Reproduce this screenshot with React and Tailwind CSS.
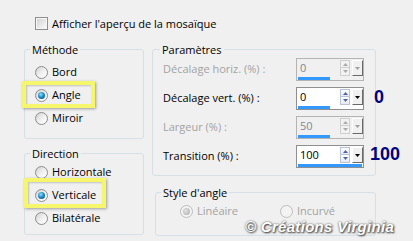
import React from "react";

function Radio({ checked, disabled }) {
  const ring = disabled
    ? "border-[#bdbdbd] bg-[#f3f3f3]"
    : "border-[#8a8c8e] bg-[linear-gradient(135deg,#d2d2d2,#f2f2f2_55%,#ffffff)]";
  return (
    <span className={`w-[13px] h-[13px] shrink-0 rounded-full border ${ring} flex items-center justify-center`}>
      {checked && (
        <span
          className={
            disabled
              ? "w-[7px] h-[7px] rounded-full bg-[radial-gradient(circle_at_40%_40%,#e4e4e4,#a6a6a6)]"
              : "w-[7px] h-[7px] rounded-full bg-[radial-gradient(circle_at_40%_35%,#8fe0ff,#1b86c6_50%,#0a3b68)]"
          }
        />
      )}
    </span>
  );
}

function RadioRow({ label, checked, disabled }) {
  return (
    <div className="flex items-center gap-[4px] h-[23px]">
      <Radio checked={checked} disabled={disabled} />
      <span className={disabled ? "text-[#a3a3a3]" : "text-black"}>{label}</span>
    </div>
  );
}

function Tri({ down, color }) {
  return (
    <svg width="5" height="3" viewBox="0 0 5 3">
      {down ? <polygon points="0,0 5,0 2.5,3" fill={color} /> : <polygon points="0,3 5,3 2.5,0" fill={color} />}
    </svg>
  );
}

function Spin({ value, enabled, bar }) {
  return (
    <div
      className={`w-[68px] h-[23px] border flex flex-col pt-[1px] ${
        enabled ? "border-[#8f8f8f] bg-white" : "border-[#b4b4b4] bg-[#f0f0f0]"
      }`}
    >
      <div className="flex h-[16px]">
        <span className={`flex-1 pl-[3px] leading-[16px] ${enabled ? "text-black" : "text-[#7d8896]"}`}>{value}</span>
        <div className="w-[10px] flex flex-col">
          <div
            className={`h-[8px] flex items-center justify-center border ${
              enabled ? "border-[#b9c3d6] bg-[linear-gradient(#ffffff,#e6e9f0)]" : "border-[#cfcfcf] bg-[#f2f2f2]"
            }`}
          >
            <Tri color={enabled ? "#4d64a8" : "#a9a9a9"} />
          </div>
          <div
            className={`h-[8px] flex items-center justify-center border border-t-0 ${
              enabled ? "border-[#b9c3d6] bg-[linear-gradient(#ffffff,#e6e9f0)]" : "border-[#cfcfcf] bg-[#f2f2f2]"
            }`}
          >
            <Tri down color={enabled ? "#4d64a8" : "#a9a9a9"} />
          </div>
        </div>
        <div className="w-[11px] ml-[2px] h-[16px] flex items-center justify-center bg-[#f0f0f0] border-t border-l border-t-white border-l-white border-r border-b border-r-[#696969] border-b-[#696969]">
          <Tri down color={enabled ? "#000000" : "#a0a0a0"} />
        </div>
      </div>
      <div className="h-[3px] mt-[1px] ml-[1px] bg-[#3399ff]" style={{ width: bar }} />
    </div>
  );
}

function Legend({ children, ml }) {
  return (
    <span className={`self-start -mt-[8px] ${ml} px-[2px] bg-[#f0f0f0] leading-[15px] text-black`}>{children}</span>
  );
}

function ParamRow({ label, enabled, value, bar, note }) {
  return (
    <div className="relative flex items-center h-[23px]">
      <span className={`pl-[10px] ${enabled ? "text-black" : "text-[#a3a3a3]"}`}>{label}</span>
      <div className="ml-auto mr-[11px]">
        <Spin value={value} enabled={enabled} bar={bar} />
      </div>
      {note}
    </div>
  );
}

export default function App() {
  return (
    <div className="relative w-[413px] h-[241px] overflow-hidden bg-[#f0f0f0] text-[11px] font-['Open_Sans',sans-serif] text-black">
      <div className="flex items-center gap-[4px] pl-[35px] pt-[17px] h-[30px]">
        <span className="w-[13px] h-[13px] shrink-0 border border-[#8e8f8f] bg-[#f6f6f6] p-[1px]">
          <span className="block w-full h-full bg-[linear-gradient(135deg,#d3d3d3,#f9f9f9)]" />
        </span>
        <span className="leading-[13px]">Afficher l'aperçu de la mosaïque</span>
      </div>

      <div className="flex gap-[8px] pl-[24px] mt-[19px]">
        <div className="w-[120px] flex flex-col gap-[14px]">
          <div className="h-[90px] flex flex-col border border-[#d5dfe5] rounded-[3px]">
            <Legend ml="ml-[5px]">Méthode</Legend>
            <div className="mt-[4px] pl-[10px] flex flex-col">
              <RadioRow label="Bord" />
              <RadioRow label="Angle" checked />
              <RadioRow label="Miroir" />
            </div>
          </div>
          <div className="h-[82px] flex flex-col border border-[#d5dfe5] rounded-[3px]">
            <Legend ml="ml-[5px]">Direction</Legend>
            <div className="pl-[10px] flex flex-col">
              <RadioRow label="Horizontale" />
              <RadioRow label="Verticale" checked />
              <RadioRow label="Bilatérale" />
            </div>
          </div>
        </div>

        <div className="w-[224px] flex flex-col gap-[16px]">
          <div className="h-[127px] flex flex-col border border-[#d5dfe5] rounded-[3px]">
            <Legend ml="ml-[7px]">Paramètres</Legend>
            <div className="mt-[1px] flex flex-col gap-[6px]">
              <ParamRow label="Décalage horiz. (%) :" value="0" bar={32} />
              <ParamRow
                label="Décalage vert. (%) :"
                enabled
                value="0"
                bar={32}
                note={
                  <span className="absolute left-[221px] top-0 leading-[21px] text-[18px] font-bold font-['Liberation_Sans',Arial,sans-serif] text-[#000080]">
                    0
                  </span>
                }
              />
              <ParamRow label="Largeur (%) :" value="50" bar={32} />
              <ParamRow
                label="Transition (%) :"
                enabled
                value="100"
                bar={64}
                note={
                  <span className="absolute left-[217px] top-0 leading-[19px] text-[18px] font-bold font-['Liberation_Sans',Arial,sans-serif] text-[#000080]">
                    100
                  </span>
                }
              />
            </div>
          </div>
          <div className="ml-[3px] w-[221px] h-[44px] flex flex-col border border-[#d5dfe5] rounded-[3px]">
            <Legend ml="ml-[5px]">Style d'angle</Legend>
            <div className="flex pl-[24px]">
              <div className="w-[100px]">
                <RadioRow label="Linéaire" checked disabled />
              </div>
              <RadioRow label="Incurvé" disabled />
            </div>
          </div>
        </div>
      </div>

      {/* annotation highlights */}
      <div className="absolute left-[22px] top-[81px] w-[73px] h-[27px] border-[4px] border-[#f6f66c] rounded-[1px] shadow-[1px_1px_3px_rgba(0,0,0,0.35),inset_1px_1px_2px_rgba(0,0,0,0.2)]" />
      <div className="absolute left-[24px] top-[178px] w-[82px] h-[30px] border-[4px] border-[#f6f66c] rounded-[1px] shadow-[1px_1px_3px_rgba(0,0,0,0.35),inset_1px_1px_2px_rgba(0,0,0,0.2)]" />

      {/* watermark */}
      <div className="absolute left-[245px] top-[218px] text-[15px] leading-[18px] font-bold italic font-['Liberation_Sans',Arial,sans-serif] text-white tracking-[0.3px] [text-shadow:1px_1px_2px_#3a3a3a,0_0_2px_#555]">
        © Créations Virginia
      </div>
    </div>
  );
}
